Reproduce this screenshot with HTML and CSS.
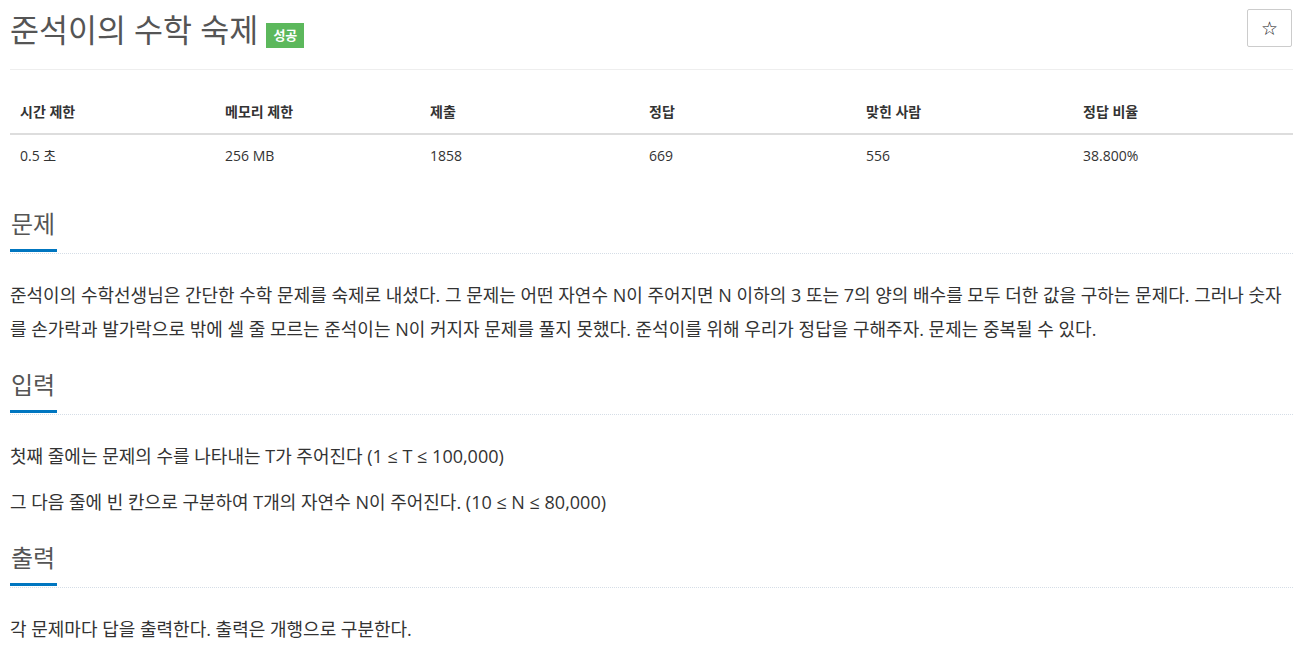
FILE: index.html
```html
<!DOCTYPE html>
<html lang="ko">
<head>
  <meta charset="UTF-8" />
  <meta name="viewport" content="width=device-width, initial-scale=1.0" />
  <title>준석이의 수학 숙제</title>
  <link rel="stylesheet" href="styles.css">
</head>
<body>
  <div class="page">
    <div class="page-header">
      <h1>준석이의 수학 숙제 <span class="label">성공</span></h1>
      <button class="star-btn" type="button">☆</button>
    </div>

    <table class="info">
      <thead>
        <tr>
          <th>시간 제한</th>
          <th>메모리 제한</th>
          <th>제출</th>
          <th>정답</th>
          <th>맞힌 사람</th>
          <th>정답 비율</th>
        </tr>
      </thead>
      <tbody>
        <tr>
          <td>0.5 초</td>
          <td>256 MB</td>
          <td>1858</td>
          <td>669</td>
          <td>556</td>
          <td>38.800%</td>
        </tr>
      </tbody>
    </table>

    <section class="problem-section">
      <div class="headline"><h2>문제</h2></div>
      <div class="problem-text">
        <p>준석이의 수학선생님은 간단한 수학 문제를 숙제로 내셨다. 그 문제는 어떤 자연수 N이 주어지면 N 이하의 3 또는 7의 양의 배수를 모두 더한 값을 구하는 문제다. 그러나 숫자를 손가락과 발가락으로 밖에 셀 줄 모르는 준석이는 N이 커지자 문제를 풀지 못했다. 준석이를 위해 우리가 정답을 구해주자. 문제는 중복될 수 있다.</p>
      </div>
    </section>

    <section class="problem-section">
      <div class="headline"><h2>입력</h2></div>
      <div class="problem-text">
        <p>첫째 줄에는 문제의 수를 나타내는 T가 주어진다 (1 ≤ T ≤ 100,000)</p>
        <p>그 다음 줄에 빈 칸으로 구분하여 T개의 자연수 N이 주어진다. (10 ≤ N ≤ 80,000)</p>
      </div>
    </section>

    <section class="problem-section">
      <div class="headline"><h2>출력</h2></div>
      <div class="problem-text">
        <p>각 문제마다 답을 출력한다. 출력은 개행으로 구분한다.</p>
      </div>
    </section>
  </div>
</body>
</html>
```

FILE: styles.css
```css
body {
  margin: 0;
  font-family: "Open Sans", "Noto Sans CJK KR", sans-serif;
  color: #333;
  background: #fff;
}
.page { padding: 0 13px 0 10px; }

.page-header {
  display: flex;
  justify-content: space-between;
  align-items: flex-start;
  border-bottom: 1px solid #eee;
  padding: 9px 0 0;
  height: 70px;
  box-sizing: border-box;
}
.page-header h1 {
  margin: 0;
  font-size: 31.5px;
  font-weight: normal;
  color: #555;
  line-height: 42px;
}
.label {
  display: inline-block;
  background: #5cb85c;
  color: #fff;
  font-size: 13px;
  font-weight: bold;
  line-height: 17px;
  padding: 4px 7px;
  vertical-align: 2px;
}
.star-btn {
  width: 45px;
  height: 38px;
  margin-right: 1px;
  background: #fff;
  border: 1px solid #ccc;
  border-radius: 2px;
  font-size: 19px;
  color: #111;
  font-family: "DejaVu Sans", sans-serif;
  padding: 0;
}

.info {
  width: 100%;
  border-collapse: collapse;
  margin-top: 21px;
  font-size: 14px;
  table-layout: fixed;
}
.info th, .info td {
  text-align: left;
  padding: 11px 10px;
  line-height: 20px;
}
.info th { border-bottom: 2px solid #ddd; font-weight: bold; }
.info th:nth-child(1) { width: 185px; }
.info th:nth-child(2) { width: 185px; }
.info th:nth-child(3) { width: 199px; }
.info th:nth-child(4) { width: 197px; }
.info th:nth-child(5) { width: 197px; }

.problem-section { margin-top: 27px; }
.problem-section + .problem-section { margin-top: 19px; }
.headline {
  border-bottom: 1px dotted #d5dde6;
  height: 49px;
}
.headline h2 {
  display: inline-block;
  margin: 0;
  height: 48px;
  box-sizing: border-box;
  border-bottom: 3px solid #0076c0;
  padding: 5px 2px 0 1px;
  font-size: 24px;
  font-weight: normal;
  color: #555;
  line-height: 30px;
}
.problem-text {
  font-size: 18px;
  line-height: 34px;
  padding-top: 24px;
}
.problem-text p { margin: 0 0 12px; }
```
